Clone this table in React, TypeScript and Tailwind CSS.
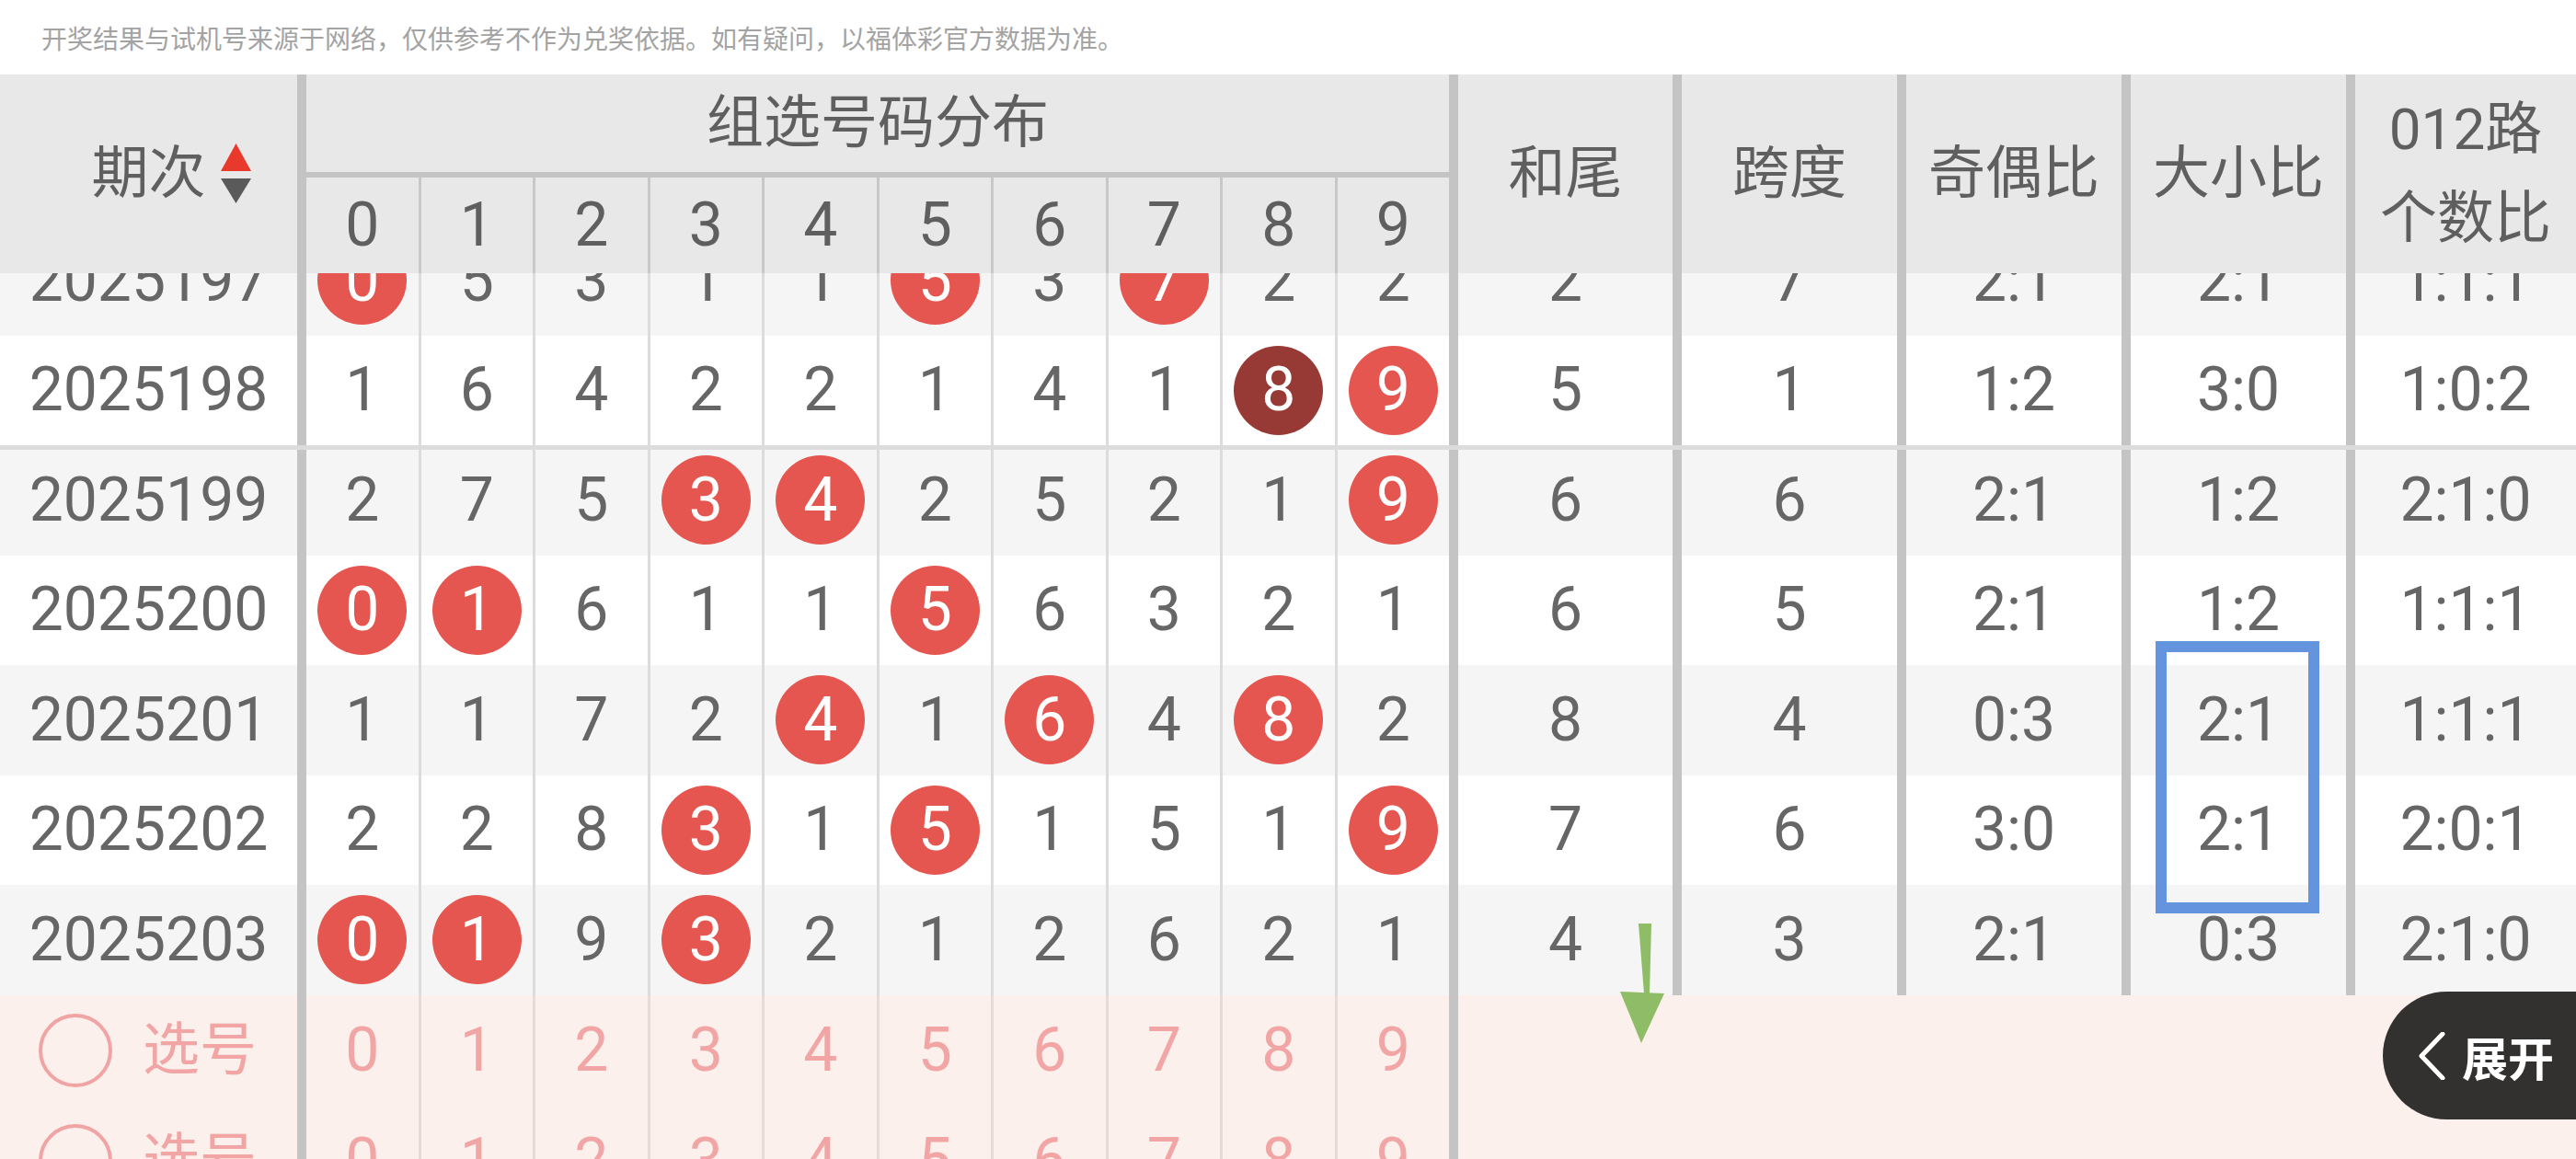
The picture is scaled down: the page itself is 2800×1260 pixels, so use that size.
import React from "react";

type Cell = [number, number]; // value, kind: 0 plain, 1 red ball, 2 dark ball

interface Row {
  id: string;
  cells: Cell[];
  hw: string;
  kd: string;
  jo: string;
  dx: string;
  lu: string;
  bg: string;
  topLine?: boolean;
}

const rows: Row[] = [
  { id: "2025197", cells: [[0, 1], [5, 0], [3, 0], [1, 0], [1, 0], [5, 1], [3, 0], [7, 1], [2, 0], [2, 0]], hw: "2", kd: "7", jo: "2:1", dx: "2:1", lu: "1:1:1", bg: "bg-[#f5f5f5]" },
  { id: "2025198", cells: [[1, 0], [6, 0], [4, 0], [2, 0], [2, 0], [1, 0], [4, 0], [1, 0], [8, 2], [9, 1]], hw: "5", kd: "1", jo: "1:2", dx: "3:0", lu: "1:0:2", bg: "bg-white" },
  { id: "2025199", cells: [[2, 0], [7, 0], [5, 0], [3, 1], [4, 1], [2, 0], [5, 0], [2, 0], [1, 0], [9, 1]], hw: "6", kd: "6", jo: "2:1", dx: "1:2", lu: "2:1:0", bg: "bg-[#f5f5f5]", topLine: true },
  { id: "2025200", cells: [[0, 1], [1, 1], [6, 0], [1, 0], [1, 0], [5, 1], [6, 0], [3, 0], [2, 0], [1, 0]], hw: "6", kd: "5", jo: "2:1", dx: "1:2", lu: "1:1:1", bg: "bg-white" },
  { id: "2025201", cells: [[1, 0], [1, 0], [7, 0], [2, 0], [4, 1], [1, 0], [6, 1], [4, 0], [8, 1], [2, 0]], hw: "8", kd: "4", jo: "0:3", dx: "2:1", lu: "1:1:1", bg: "bg-[#f5f5f5]" },
  { id: "2025202", cells: [[2, 0], [2, 0], [8, 0], [3, 1], [1, 0], [5, 1], [1, 0], [5, 0], [1, 0], [9, 1]], hw: "7", kd: "6", jo: "3:0", dx: "2:1", lu: "2:0:1", bg: "bg-white" },
  { id: "2025203", cells: [[0, 1], [1, 1], [9, 0], [3, 1], [2, 0], [1, 0], [2, 0], [6, 0], [2, 0], [1, 0]], hw: "4", kd: "3", jo: "2:1", dx: "0:3", lu: "2:1:0", bg: "bg-[#f5f5f5]" },
];

const digits = [0, 1, 2, 3, 4, 5, 6, 7, 8, 9];

function SortIcon() {
  return (
    <svg width="34" height="66" viewBox="0 0 34 66" className="absolute left-full top-1/2 ml-[16px] -translate-y-1/2">
      <polygon points="0,30 33,30 16.5,0" fill="#e8392c" />
      <polygon points="0,38 33,38 16.5,65" fill="#5a5a5a" />
    </svg>
  );
}

function Bar() {
  return <div className="w-[10px] shrink-0 bg-[#c4c4c4]" />;
}

function Header() {
  return (
    <div className="flex h-[216px] bg-[#e8e8e8] text-[#5f5f5f] leading-none">
      <div className="flex w-[323px] items-center justify-center text-[62px]">
        <span className="relative">
          期次
          <SortIcon />
        </span>
      </div>
      <Bar />
      <div className="flex w-[1242px] flex-col">
        <div className="flex h-[106px] items-center justify-center text-[62px]">组选号码分布</div>
        <div className="h-[6px] bg-[#c4c4c4]" />
        <div className="flex flex-1 divide-x-[3px] divide-[#c8c8c8]">
          {digits.map((d) => (
            <div key={d} className="flex flex-1 items-center justify-center text-[66px]">
              {d}
            </div>
          ))}
        </div>
      </div>
      <Bar />
      <div className="flex w-[233px] items-center justify-center text-[62px]">和尾</div>
      <Bar />
      <div className="flex w-[234px] items-center justify-center text-[62px]">跨度</div>
      <Bar />
      <div className="flex w-[234px] items-center justify-center text-[62px]">奇偶比</div>
      <Bar />
      <div className="flex w-[234px] items-center justify-center text-[62px]">大小比</div>
      <Bar />
      <div className="flex w-[240px] flex-col items-center justify-center gap-[35px] text-[62px]">
        <span>012路</span>
        <span>个数比</span>
      </div>
    </div>
  );
}

function Ball({ v, dark }: { v: number; dark: boolean }) {
  return (
    <div
      className={
        "flex h-[97px] w-[97px] items-center justify-center rounded-full text-white " +
        (dark ? "bg-[#973a36]" : "bg-[#e4564f]")
      }
    >
      {v}
    </div>
  );
}

function DataRow({ r }: { r: Row }) {
  return (
    <div className={"relative flex h-[119.5px] text-[66px] leading-none text-[#666666] " + r.bg}>
      {r.topLine && <div className="absolute inset-x-0 top-0 h-[5px] bg-[#dcdcdc]" />}
      <div className="flex w-[323px] items-center justify-center">{r.id}</div>
      <Bar />
      <div className="flex w-[1242px] divide-x-[3px] divide-[#dcdcdc]">
        {r.cells.map(([v, k], i) => (
          <div key={i} className="flex flex-1 items-center justify-center">
            {k === 0 ? v : <Ball v={v} dark={k === 2} />}
          </div>
        ))}
      </div>
      <Bar />
      <div className="flex w-[233px] items-center justify-center">{r.hw}</div>
      <Bar />
      <div className="flex w-[234px] items-center justify-center">{r.kd}</div>
      <Bar />
      <div className="flex w-[234px] items-center justify-center">{r.jo}</div>
      <Bar />
      <div className="flex w-[234px] items-center justify-center">{r.dx}</div>
      <Bar />
      <div className="flex w-[240px] items-center justify-center">{r.lu}</div>
    </div>
  );
}

function PickRow() {
  return (
    <div className="flex h-[120px] leading-none text-[#f1a5a5]">
      <div className="flex w-[323px] items-center gap-[33px] pl-[42px]">
        <div className="h-[80px] w-[80px] rounded-full border-[4px] border-[#f0a4a4]" />
        <span className="text-[62px]">选号</span>
      </div>
      <Bar />
      <div className="flex w-[1242px] divide-x-[3px] divide-[#e6dcd7]">
        {digits.map((d) => (
          <div key={d} className="flex flex-1 items-center justify-center text-[66px]">
            {d}
          </div>
        ))}
      </div>
      <Bar />
    </div>
  );
}

export default function App() {
  return (
    <div className="relative h-[1260px] w-[2800px] overflow-hidden bg-white font-['Roboto','Noto_Sans_CJK_SC',sans-serif]">
      {/* Disclaimer */}
      <div className="flex h-[81px] items-center pl-[45px] font-['Noto_Sans_CJK_SC',sans-serif] text-[28px] text-[#a3a3a3]">
        开奖结果与试机号来源于网络，仅供参考不作为兑奖依据。如有疑问，以福体彩官方数据为准。
      </div>

      <Header />

      {/* Body, scrolled a bit under the header */}
      <div className="h-[785px] overflow-hidden">
        <div className="-mt-[52px]">
          {rows.map((r) => (
            <DataRow key={r.id} r={r} />
          ))}
        </div>
      </div>

      {/* Pick rows */}
      <div className="h-[178px] overflow-hidden bg-[#fbf0eb]">
        <PickRow />
        <PickRow />
      </div>

      {/* Blue highlight box */}
      <div className="absolute left-[2343px] top-[697px] h-[296px] w-[178px] border-[12px] border-[#6594df]" />

      {/* Green arrow */}
      <svg className="absolute left-[1758px] top-[1002px]" width="56" height="134" viewBox="0 0 56 134">
        <polygon points="23,2 37,2 35,78 29,78" fill="#8fbc66" />
        <polygon points="3,76 51,78 26,132" fill="#8fbc66" />
      </svg>

      {/* Expand pill */}
      <div className="absolute left-[2590px] top-[1078px] flex h-[139px] w-[260px] items-center gap-[18px] rounded-l-full bg-[#33312f] pl-[38px] text-white">
        <svg width="30" height="52" viewBox="0 0 30 52">
          <polyline points="27,2 4,26 27,50" fill="none" stroke="#ffffff" strokeWidth="5" strokeLinecap="round" strokeLinejoin="round" />
        </svg>
        <span className="font-['Noto_Sans_CJK_SC',sans-serif] text-[50px] font-bold leading-none">展开</span>
      </div>
    </div>
  );
}
